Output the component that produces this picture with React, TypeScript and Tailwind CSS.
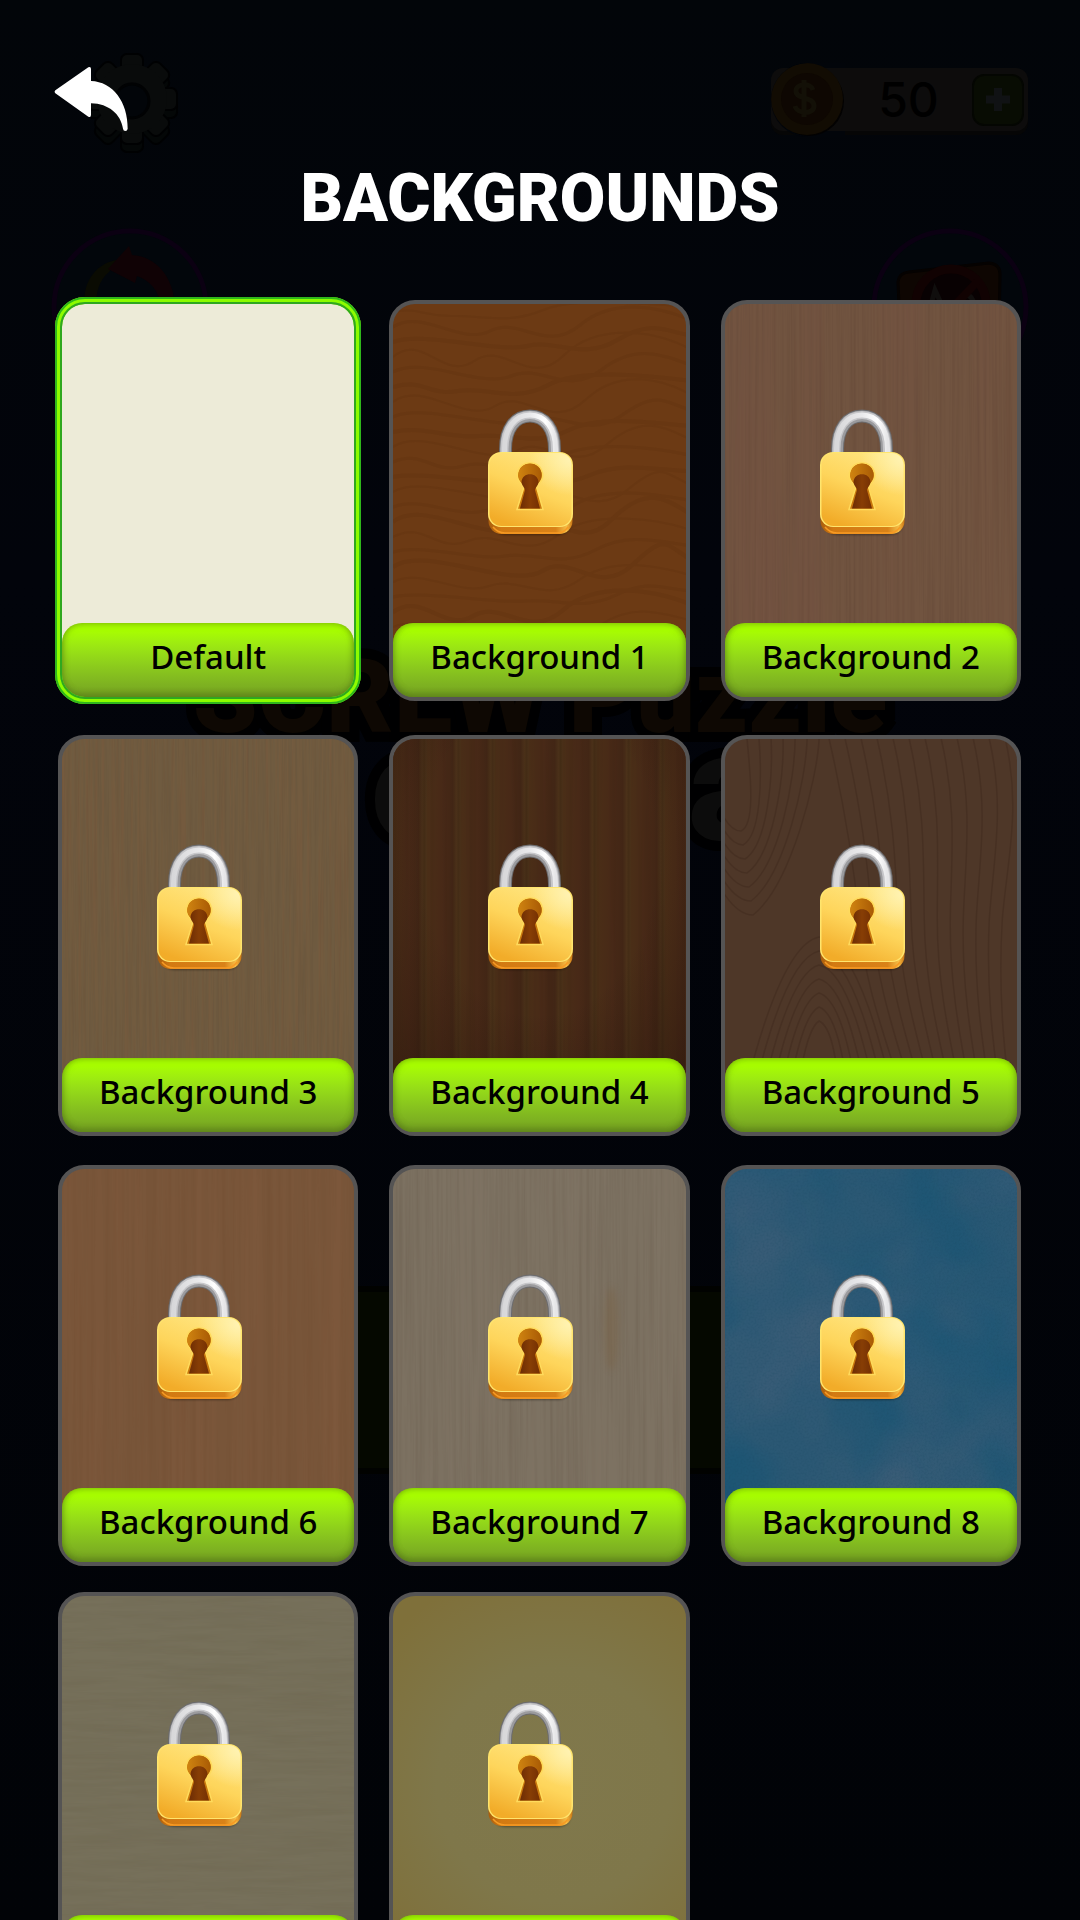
import React from "react";

type Texture =
  | "plain"
  | "waves"
  | "fineGrain"
  | "oak"
  | "planks"
  | "contour"
  | "pine"
  | "ash"
  | "clouds"
  | "plaster"
  | "glow";

type Item = { name: string; locked: boolean; texture: Texture };

const rows: { spacing: string; items: Item[] }[] = [
  {
    spacing: "mt-0",
    items: [
      { name: "Default", locked: false, texture: "plain" },
      { name: "Background 1", locked: true, texture: "waves" },
      { name: "Background 2", locked: true, texture: "fineGrain" },
    ],
  },
  {
    spacing: "mt-[34px]",
    items: [
      { name: "Background 3", locked: true, texture: "oak" },
      { name: "Background 4", locked: true, texture: "planks" },
      { name: "Background 5", locked: true, texture: "contour" },
    ],
  },
  {
    spacing: "mt-[29px]",
    items: [
      { name: "Background 6", locked: true, texture: "pine" },
      { name: "Background 7", locked: true, texture: "ash" },
      { name: "Background 8", locked: true, texture: "clouds" },
    ],
  },
  {
    spacing: "mt-[26px]",
    items: [
      { name: "Background 9", locked: true, texture: "plaster" },
      { name: "Background 10", locked: true, texture: "glow" },
    ],
  },
];

const baseColour: Record<Texture, string> = {
  plain: "bg-[#edebd8]",
  waves: "bg-[#6c3a14]",
  fineGrain: "bg-[#715440]",
  oak: "bg-[#6f5b40]",
  planks: "bg-[#452816]",
  contour: "bg-[#4e3728]",
  pine: "bg-[#785539]",
  ash: "bg-[#7c7161]",
  clouds: "bg-[#2b5874]",
  plaster: "bg-[#756f59]",
  glow: "bg-[radial-gradient(circle_at_55%_48%,#80784c_0%,#7f774a_45%,#7f703a_85%)]",
};

/* Streaks and clouds made from noise; tint is "r g b" in 0..1, strength scales the alpha. */
function Noise({
  id,
  freq,
  tint,
  strength,
  seed,
}: {
  id: string;
  freq: string;
  tint: [number, number, number];
  strength: number;
  seed: number;
}) {
  return (
    <>
      <filter id={id} x="0" y="0" width="100%" height="100%" colorInterpolationFilters="sRGB">
        <feTurbulence type="fractalNoise" baseFrequency={freq} numOctaves={3} seed={seed} />
        <feColorMatrix
          values={`0 0 0 0 ${tint[0]}  0 0 0 0 ${tint[1]}  0 0 0 0 ${tint[2]}  ${strength * 2} 0 0 0 ${-strength * 0.75}`}
        />
      </filter>
      <rect width="100%" height="100%" filter={`url(#${id})`} />
    </>
  );
}

function contourLines() {
  const out: React.ReactNode[] = [];
  for (let i = 0; i < 7; i++) {
    const k = i * 9;
    out.push(
      <path key={`a${i}`} d={`M${66 - k} 400 C ${72 - k} 350 ${80 - k * 0.5} ${290 - i * 14} ${94} ${282 - i * 14} C ${112 + k * 0.5} ${290 - i * 14} ${112 + k} 350 ${124 + k} 400`} />,
    );
  }
  for (let i = 0; i < 12; i++) {
    out.push(
      <path key={`b${i}`} d={`M${104 + i * 16} 0 C ${120 + i * 16} 70 ${128 + i * 14} 120 ${134 + i * 13} 180 C ${140 + i * 12} 260 ${170 + i * 10} 320 ${190 + i * 9} 400`} />,
    );
  }
  for (let i = 0; i < 7; i++) {
    out.push(
      <path key={`c${i}`} d={`M${-20 - i * 5} 0 C ${-14 - i * 2} ${70 + i * 10} 4 ${92 + i * 14} ${16 + i * 2} ${92 + i * 14} C ${30 + i * 6} ${86 + i * 10} ${26 + i * 11} 40 ${22 + i * 12} 0`} />,
    );
  }
  return out;
}

function waveLines() {
  const out: React.ReactNode[] = [];
  for (let i = 0; i < 27; i++) {
    const y = 8 + i * 15;
    const a = 5 + ((i * 7) % 11) * 2;
    const x = 60 + ((i * 37) % 90);
    out.push(
      <path
        key={i}
        strokeWidth={2 + (i % 3)}
        d={`M0 ${y} C 30 ${y - a} ${x - 30} ${y + a} ${x} ${y + 4} S ${x + 55} ${y + a + 8} ${x + 90} ${y - 2} S 270 ${y - a} 300 ${y - 6}`}
      />,
    );
  }
  return out;
}

function TextureArt({ kind }: { kind: Texture }) {
  if (kind === "plain" || kind === "glow") return null;
  return (
    <svg aria-hidden="true" className="absolute inset-0 size-full" viewBox="0 0 292 393" preserveAspectRatio="none">
      {kind === "waves" && (
        <g fill="none" stroke="#5c300f" opacity="0.24">
          {waveLines()}
        </g>
      )}
      {kind === "fineGrain" && (
        <>
          <Noise id="fine-a" freq="0.35 0.004" tint={[0.36, 0.25, 0.19]} strength={0.35} seed={3} />
          <Noise id="fine-b" freq="0.02 0.001" tint={[0.47, 0.31, 0.26]} strength={0.3} seed={8} />
        </>
      )}
      {kind === "oak" && (
        <>
          <Noise id="oak-a" freq="0.3 0.004" tint={[0.49, 0.35, 0.23]} strength={0.5} seed={5} />
          <Noise id="oak-b" freq="0.4 0.01" tint={[0.36, 0.28, 0.2]} strength={0.25} seed={12} />
        </>
      )}
      {kind === "planks" && (
        <>
          <defs>
            <linearGradient id="plank" x1="0" x2="34" gradientUnits="userSpaceOnUse" spreadMethod="repeat">
              <stop offset="0" stopColor="#4a2e17" />
              <stop offset="0.45" stopColor="#482917" />
              <stop offset="0.75" stopColor="#422615" />
              <stop offset="0.86" stopColor="#4b3119" />
              <stop offset="0.92" stopColor="#452d16" />
              <stop offset="1" stopColor="#4b3119" />
            </linearGradient>
            <radialGradient id="plank-shade" cx="0.5" cy="0.3" r="0.8">
              <stop offset="0.5" stopColor="#200f08" stopOpacity="0" />
              <stop offset="1" stopColor="#200f08" stopOpacity="0.45" />
            </radialGradient>
          </defs>
          <rect width="292" height="393" fill="url(#plank)" />
          <Noise id="plank-a" freq="0.12 0.002" tint={[0.2, 0.12, 0.06]} strength={0.2} seed={4} />
          <rect width="292" height="393" fill="url(#plank-shade)" />
        </>
      )}
      {kind === "contour" && (
        <g fill="none" stroke="#402a1e" strokeWidth="1.5" opacity="0.5">
          {contourLines()}
        </g>
      )}
      {kind === "pine" && (
        <>
          <Noise id="pine-a" freq="0.06 0.002" tint={[0.52, 0.36, 0.25]} strength={0.4} seed={7} />
          <Noise id="pine-b" freq="0.2 0.003" tint={[0.42, 0.28, 0.17]} strength={0.25} seed={2} />
        </>
      )}
      {kind === "ash" && (
        <>
          <Noise id="ash-a" freq="0.3 0.005" tint={[0.42, 0.37, 0.31]} strength={0.45} seed={6} />
          <Noise id="ash-b" freq="0.02 0.002" tint={[0.53, 0.48, 0.42]} strength={0.3} seed={9} />
          <ellipse cx="218" cy="160" rx="7" ry="42" fill="#7a6040" opacity="0.35" className="blur-[3px]" />
        </>
      )}
      {kind === "clouds" && (
        <>
          <Noise id="cloud-a" freq="0.009 0.009" tint={[0.26, 0.37, 0.47]} strength={0.7} seed={11} />
          <Noise id="cloud-b" freq="0.008 0.008" tint={[0.02, 0.32, 0.46]} strength={0.6} seed={31} />
          <Noise id="cloud-c" freq="0.5 0.5" tint={[0.1, 0.28, 0.38]} strength={0.25} seed={2} />
        </>
      )}
      {kind === "plaster" && (
        <>
          <Noise id="plaster-a" freq="0.01 0.12" tint={[0.42, 0.39, 0.3]} strength={0.35} seed={14} />
          <Noise id="plaster-b" freq="0.02 0.3" tint={[0.5, 0.47, 0.4]} strength={0.15} seed={17} />
        </>
      )}
    </svg>
  );
}

function Padlock() {
  const arch = "M18.500 46 V40 C18.500 20 28 7 43 7 S67.500 20 67.500 40 V46";
  return (
    <svg aria-hidden="true" className="relative h-[128px] w-[88px]" viewBox="0 0 88 128">
      <path d="M6 114 Q6 125 18 126 H72 Q84 125 84 112 Z" fill="#000" opacity="0.35" className="blur-[1px]" />
      <g fill="none">
        <path d={arch} stroke="#6b6b6e" strokeWidth="13" />
        <path d={arch} stroke="#9b9b9e" strokeWidth="11" />
        <path d="M17.500 46 V40 C17.500 19 28 6 43 6 S68 19 68 40 V46" stroke="#c6c6c9" strokeWidth="8" />
        <path d="M17.500 46 V40 C17.500 19 28 6 43 6 S68.500 19 68.500 40 V46" stroke="url(#shine)" strokeWidth="5" />
      </g>
      <rect x="1.500" y="60" width="84" height="65" rx="13" fill="url(#lock-side)" />
      <path d="M6 118 Q11 124 18 124 H70 Q77 124 81 118" fill="none" stroke="#f79a24" strokeWidth="1.500" />
      <rect x="1" y="43" width="85" height="75" rx="13" fill="#ffe56d" />
      <rect x="2.500" y="44" width="82" height="73" rx="12" fill="url(#lock-face)" />
      <rect x="2.500" y="44" width="82" height="73" rx="12" fill="url(#lock-glow)" />
      <path d="M43 54 a12 12 0 0 0 -9 20.500 L37 78 L30 100.500 H56 L49.500 78 L52 74.500 a12 12 0 0 0 -9 -20.500 Z" fill="#c9780d" stroke="#ffdb5c" strokeWidth="1.500" />
      <circle cx="43" cy="66" r="11.500" fill="url(#hole-top)" />
      <path d="M34.500 73 C35 62.500 51 62.500 51.500 73 C51 77 48 79 48 81 L53 99.500 H33 L38 81 C38 79 35 77 34.500 73 Z" fill="url(#hole)" />
    </svg>
  );
}

function SharedPaints() {
  return (
    <svg aria-hidden="true" className="absolute size-0">
      <defs>
        <linearGradient id="lock-face" x1="0.75" y1="0" x2="0.3" y2="1">
          <stop offset="0" stopColor="#ffe682" />
          <stop offset="0.5" stopColor="#fed55b" />
          <stop offset="1" stopColor="#f2ac29" />
        </linearGradient>
        <radialGradient id="lock-glow" cx="0.98" cy="0.08" r="0.5">
          <stop offset="0" stopColor="#fff3b4" stopOpacity="0.95" />
          <stop offset="1" stopColor="#fff3b4" stopOpacity="0" />
        </radialGradient>
        <linearGradient id="lock-side">
          <stop offset="0" stopColor="#a95d0c" />
          <stop offset="0.15" stopColor="#d37a12" />
          <stop offset="0.8" stopColor="#d98218" />
          <stop offset="0.93" stopColor="#f5bc45" />
          <stop offset="1" stopColor="#c97512" />
        </linearGradient>
        <linearGradient id="shine">
          <stop offset="0" stopColor="#d8d8da" />
          <stop offset="0.5" stopColor="#e9e9eb" />
          <stop offset="0.8" stopColor="#ffffff" />
          <stop offset="1" stopColor="#e6e6e8" />
        </linearGradient>
        <linearGradient id="hole-top">
          <stop offset="0" stopColor="#cf8310" />
          <stop offset="1" stopColor="#a95b05" />
        </linearGradient>
        <linearGradient id="hole" x1="0" x2="1">
          <stop offset="0" stopColor="#6d2c04" />
          <stop offset="0.5" stopColor="#873e05" />
          <stop offset="1" stopColor="#742f03" />
        </linearGradient>
      </defs>
    </svg>
  );
}

function Card({ item, selected }: { item: Item; selected: boolean }) {
  return (
    <button
      type="button"
      aria-pressed={selected}
      className="relative flex h-[401px] flex-col rounded-[26px] border-4 border-[#555454] bg-[#555454] text-left"
    >
      <span className={`absolute inset-0 overflow-hidden rounded-[22px] ${baseColour[item.texture]}`}>
        <TextureArt kind={item.texture} />
      </span>
      <span className="flex w-full flex-1 items-center justify-center pt-[18px] pr-4">
        {item.locked && <Padlock />}
      </span>
      <span className="relative flex h-[74px] w-full items-center justify-center rounded-[20px] bg-linear-to-b from-[#a8fe00] from-10% to-[#77a622] to-95% pb-2 text-[33px] leading-none font-medium text-black shadow-[inset_0_-3px_6px_#4a6a1466,inset_0_0_7px_#4a6a1480]">
        {item.name}
      </span>
      {selected && (
        <span className="absolute -inset-[7px] rounded-[30px] border-[7px] border-[#8dfc00]">
          <span className="absolute -inset-[7px] rounded-[30px] border-2 border-[#2fb71b]" />
          <span className="absolute -inset-[2px] rounded-[25px] border-2 border-[#2fa81f]" />
        </span>
      )}
    </button>
  );
}

function Gear() {
  return (
    <svg className="h-[104px] w-[90px]" viewBox="0 0 90 104">
      <g stroke="#000102" strokeWidth="2">
        <g fill="#040707">
          {[0, 45, 90, 135].map((a) => (
            <rect key={a} x="30" y="10" width="22" height="90" rx="6" transform={`rotate(${a} 41 55)`} />
          ))}
        </g>
        <g fill="#090b0b">
          {[0, 45, 90, 135].map((a) => (
            <rect key={a} x="30" y="2" width="22" height="90" rx="6" transform={`rotate(${a} 41 47)`} />
          ))}
        </g>
      </g>
      <circle cx="41" cy="47" r="35" fill="#090b0b" />
      <circle cx="41" cy="49" r="17" fill="#020509" stroke="#010203" strokeWidth="3" />
    </svg>
  );
}

function HomeScreen() {
  return (
    <div
      aria-hidden="true"
      className="absolute inset-0 flex flex-col overflow-hidden bg-linear-to-b from-[#020509] via-[#02040b] via-30% to-[#010307]"
    >
      <div className="mt-[52px] flex h-[104px] justify-between pr-[52px] pl-[91px]">
        <Gear />
        <div className="mt-4 flex h-[63px] w-[257px] items-center justify-between rounded-xl bg-[#0d0c0c] bg-clip-padding pr-1 shadow-[0_4px_0_#060606]">
          <svg className="h-[74px] w-[74px] shrink-0 rounded-l-full bg-[#02050a]" viewBox="0 0 74 74">
            <rect x="37" y="5" width="37" height="63" fill="#0d0c0c" />
            <circle cx="38" cy="38" r="35" fill="#030202" />
            <circle cx="36" cy="36" r="36" fill="#120c03" />
            <circle cx="36" cy="36" r="26" fill="#0e0702" />
            <path d="M42 27 C40 20 25 20 25 28 C25 37 43 33 43 43 C43 52 26 51 24 43 M33 17 V54" fill="none" stroke="#131007" strokeWidth="5" />
          </svg>
          <span className="font-['Inter',sans-serif] text-[48px] leading-none font-medium text-black">50</span>
          <svg className="size-[52px] shrink-0" viewBox="0 0 52 52">
            <rect x="1" y="1" width="50" height="50" rx="11" fill="#080c03" stroke="#040602" strokeWidth="2" />
            <path d="M26 14 V37 M14 25.500 H38" stroke="#101214" strokeWidth="8" />
          </svg>
        </div>
      </div>
      <div className="mt-[72px] flex h-[427px] justify-between px-[51px]">
        <svg className="size-[158px]" viewBox="0 0 158 158">
          <circle cx="79" cy="79" r="76" fill="#02060b" stroke="#0b0012" strokeWidth="5" />
          <path d="M34 79 C30 50 50 34 66 32 L58 44 C48 52 44 66 46 79 Z" fill="#0a0b02" />
          <path d="M57 41 L78 18 L81 27 C104 28 123 48 124 79 L110 79 C108 62 99 53 86 48 L84 55 Z" fill="#100205" />
        </svg>
        <svg className="size-[158px]" viewBox="0 0 158 158">
          <circle cx="79" cy="79" r="76" fill="#02060b" stroke="#0b0012" strokeWidth="5" />
          <path d="M29 100 L27 54 Q28 45 38 44 L118 35 Q129 36 129 46 L128 100 Z" fill="#0e0602" stroke="#050201" strokeWidth="3" />
          <circle cx="80" cy="76" r="35" fill="#080102" stroke="#110202" strokeWidth="9" />
          <path d="M58 84 L64 62 L74 84 M90 84 C88 62 104 62 104 84" fill="none" stroke="#100e0d" strokeWidth="5" />
          <path d="M64 98 L106 54" stroke="#110202" strokeWidth="8" />
        </svg>
      </div>
      <p className="text-center font-['Roboto',sans-serif] text-[104px] leading-[84px] font-black text-[#0e0803] [paint-order:stroke] [-webkit-text-stroke:20px_#000001]">
        SCREW Puzzle
      </p>
      <div className="mt-1 flex justify-center gap-[232px] pl-[60px] font-['Roboto',sans-serif] text-[152px] leading-[90px] font-black text-[#0c0c0c] [paint-order:stroke] [-webkit-text-stroke:20px_#000001]">
        <span>o</span>
        <span>a</span>
      </div>
      <div className="mt-[453px] h-[188px] w-[420px] self-center border-y-[6px] border-[#010200] bg-[#050800]" />
    </div>
  );
}

export default function App() {
  return (
    <main className="relative flex h-screen flex-col overflow-hidden bg-[#020509] font-['Noto_Sans',sans-serif]">
      <SharedPaints />
      <HomeScreen />
      <header className="relative px-[54px] pt-[66px]">
        <button type="button" aria-label="Back" className="block">
          <svg aria-hidden="true" className="h-[66px] w-[74px]" viewBox="0 0 222 198">
            <path
              d="M3 81 Q0 77 4 73 L103 4 Q111 1 111 9 V45 C176 47 222 108 221 188 Q220 195 214 195 Q208 195 207 188 C200 145 165 113 111 112 V146 Q111 156 103 152 Z"
              fill="#fff"
            />
          </svg>
        </button>
        <h1 className="mt-[22px] text-center font-['Roboto',sans-serif] text-[66px] leading-[90px] font-black text-white">
          BACKGROUNDS
        </h1>
      </header>
      <div className="relative mt-14 min-h-0 flex-1 pr-[59px] pl-[58px]">
        {rows.map((row) => (
          <div key={row.spacing} className={`grid grid-cols-3 gap-x-[31px] ${row.spacing}`}>
            {row.items.map((item) => (
              <Card key={item.name} item={item} selected={item.name === "Default"} />
            ))}
          </div>
        ))}
      </div>
    </main>
  );
}
